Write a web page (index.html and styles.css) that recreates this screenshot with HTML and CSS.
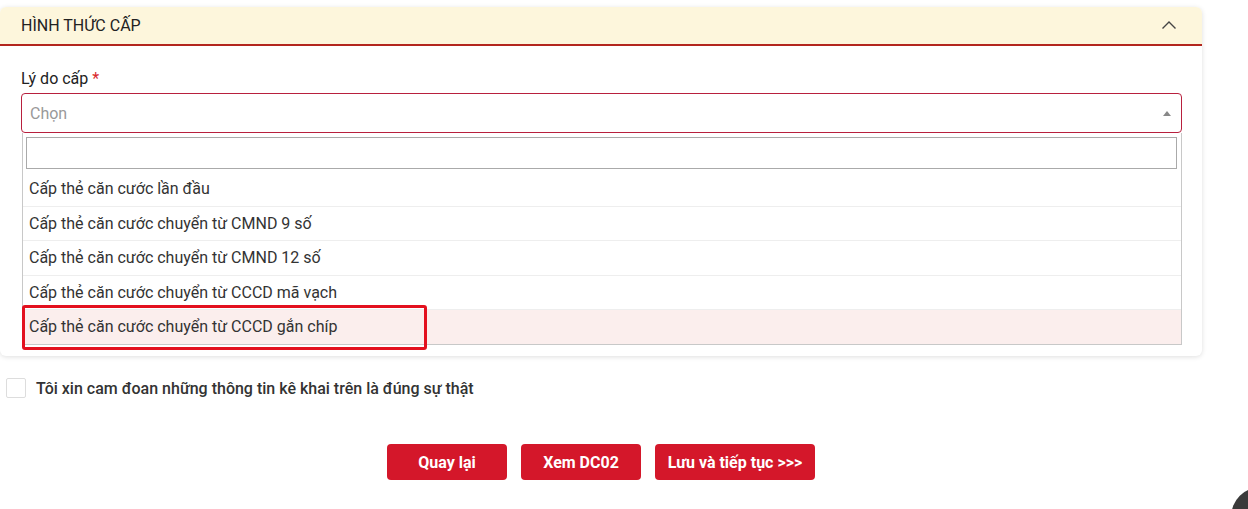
FILE: index.html
```html
<!DOCTYPE html>
<html lang="vi">
<head>
<meta charset="utf-8">
<link rel="stylesheet" href="styles.css">
</head>
<body>
<div class="page">
  <section class="card">
    <header class="card-head">
      <span class="card-title">HÌNH THỨC CẤP</span>
      <svg class="chev" width="16" height="10" viewBox="0 0 16 10"><path d="M1.5 8.5 L8 2 L14.5 8.5" fill="none" stroke="#444" stroke-width="1.4"/></svg>
    </header>
    <div class="card-body">
      <label class="field-label">Lý do cấp <span class="req">*</span></label>
      <div class="select">
        <span class="placeholder">Chọn</span>
        <span class="tri"></span>
      </div>
      <div class="dropdown">
        <div class="search-wrap"><input class="search" type="text"></div>
        <ul class="options">
          <li class="opt">Cấp thẻ căn cước lần đầu</li>
          <li class="opt">Cấp thẻ căn cước chuyển từ CMND 9 số</li>
          <li class="opt">Cấp thẻ căn cước chuyển từ CMND 12 số</li>
          <li class="opt">Cấp thẻ căn cước chuyển từ CCCD mã vạch</li>
          <li class="opt active">Cấp thẻ căn cước chuyển từ CCCD gắn chíp<span class="mark"></span></li>
        </ul>
      </div>
    </div>
  </section>
  <div class="agree">
    <span class="checkbox"></span>
    <span class="agree-text">Tôi xin cam đoan những thông tin kê khai trên là đúng sự thật</span>
  </div>
  <div class="actions">
    <button class="btn w120">Quay lại</button>
    <button class="btn w120">Xem DC02</button>
    <button class="btn w160">Lưu và tiếp tục &gt;&gt;&gt;</button>
  </div>
</div>
<div class="fab"></div>
</body>
</html>
```
FILE: styles.css
```css
* { box-sizing: border-box; }
html, body { margin: 0; padding: 0; background: #fff; }
body { font-family: Roboto, "Liberation Sans", sans-serif; color: #333; overflow: hidden; width: 1248px; height: 509px; }
.page { padding-top: 7px; width: 1202px; }
.card {
  background: #fff;
  border-radius: 6px;
  box-shadow: 0 1px 5px rgba(0,0,0,0.13);
  overflow: hidden;
}
.card-head {
  height: 39px;
  background: #fdf6dc;
  border-bottom: 2px solid #b3261e;
  display: flex;
  align-items: center;
  justify-content: space-between;
  padding: 0 25px 0 21px;
}
.card-title { font-size: 16px; color: #222; }
.chev { display: block; margin-top: -2px; }
.card-body { padding: 23px 20px 11px 21px; }
.field-label { display: block; font-size: 16px; color: #222; line-height: 20px; margin-bottom: 4px; }
.req { color: #d9262c; }
.select {
  height: 40px;
  border: 1px solid #b8203e;
  border-radius: 4px;
  display: flex;
  align-items: center;
  justify-content: space-between;
  padding: 0 9px 0 8px;
}
.placeholder { font-size: 16px; color: #999; }
.tri { width: 0; height: 0; border-left: 4px solid transparent; border-right: 4px solid transparent; border-bottom: 5px solid #888; margin-right: 1px; }
.dropdown {
  margin: 0 0 0 1px;
  border: 1px solid #c8c8c8;
  border-top: none;
  background: #fff;
}
.search-wrap { padding: 4px 4px 3px 3px; }
.search { display: block; width: 100%; height: 32px; border: 1px solid #aaa; margin: 0; outline: none; }
.options { list-style: none; margin: 0; padding: 0; }
.opt {
  position: relative;
  height: 34.3px;
  line-height: 33px;
  font-size: 16px;
  color: #333;
  padding-left: 6px;
  border-top: 1px solid #eee;
}
.opt:first-child { border-top: none; height: 34px; line-height: 34px; }
.opt.active { background: #fbeeed; height: 35.5px; line-height: 34px; }
.mark {
  position: absolute;
  left: -1px;
  top: -5px;
  width: 405px;
  height: 45px;
  border: 3px solid #e3101e;
  border-radius: 3px;
}
.agree { display: flex; align-items: center; margin-top: 22px; padding-left: 6px; }
.checkbox { width: 20px; height: 20px; border: 1px solid #ddd; border-radius: 2px; margin-right: 10px; }
.agree-text { font-size: 16px; font-weight: 500; color: #333; }
.actions { display: flex; justify-content: center; gap: 14px; margin-top: 46px; }
.btn {
  height: 36px;
  border: none;
  border-radius: 4px;
  background: #d4172a;
  color: #fff;
  font-family: Roboto, "Liberation Sans", sans-serif;
  font-size: 16px;
  font-weight: 700;
  padding: 0;
}
.w120 { width: 120px; }
.w160 { width: 160px; }
.fab {
  position: fixed;
  left: 1231px;
  top: 487px;
  width: 60px;
  height: 60px;
  border-radius: 50%;
  background: #3a3a3a;
}
```
